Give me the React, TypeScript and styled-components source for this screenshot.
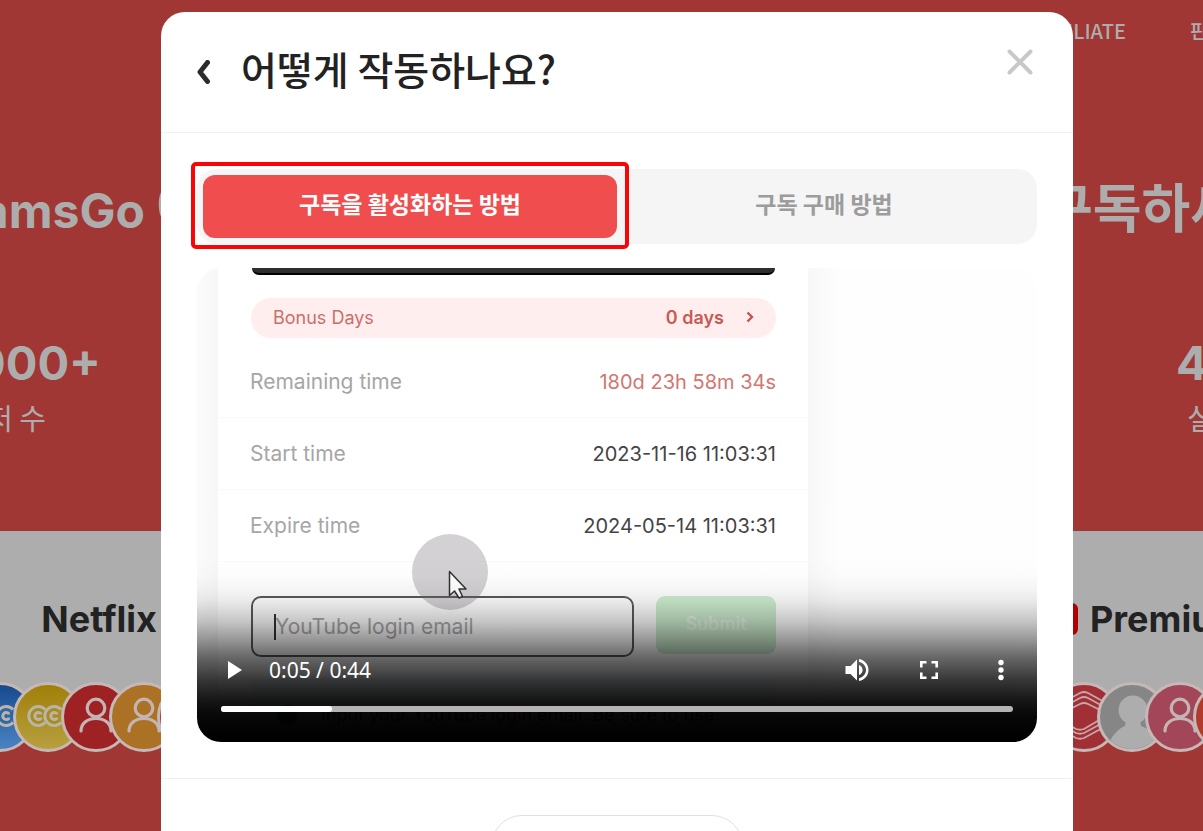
import React, { useState } from "react";
import styled, { createGlobalStyle } from "styled-components";

const GlobalStyle = createGlobalStyle`
  *, *::before, *::after { box-sizing: border-box; }
  html, body { margin: 0; padding: 0; overflow: hidden; background: #a03734; }
  body, button, input {
    font-family: Inter, "Noto Sans CJK KR", sans-serif;
  }
  button { border: 0; padding: 0; margin: 0; background: none; cursor: pointer; }
`;

const Root = styled.div`
  position: relative;
  min-height: 100vh;
  overflow: hidden;
`;

/* ---------- page behind the dialog ---------- */

const Backdrop = styled.div`
  display: flex;
  flex-direction: column;
  color: #adadad;
  white-space: nowrap;
`;

const Hero = styled.section`
  display: flex;
  flex-direction: column;
  padding-bottom: 87px;
`;

const SplitRow = styled.div<{ $height: number; $top?: number }>`
  display: grid;
  grid-template-columns: 227fr 786fr 190fr;
  align-items: center;
  height: ${(p) => p.$height}px;
  margin-top: ${(p) => p.$top ?? 0}px;
`;

const LeftCell = styled.div<{ $pad?: number }>`
  display: flex;
  justify-content: flex-end;
  align-items: center;
  min-width: 0;
  padding-right: ${(p) => p.$pad ?? 0}px;
`;

const RightCell = styled.div<{ $pad?: number; $gap?: number }>`
  grid-column: 3;
  display: flex;
  align-items: center;
  min-width: 0;
  gap: ${(p) => p.$gap ?? 0}px;
  padding-left: ${(p) => p.$pad ?? 0}px;
`;

const NavLink = styled.a`
  color: inherit;
  text-decoration: none;
  font-family: "Noto Sans CJK KR", sans-serif;
  font-size: 20px;
  font-weight: 500;
`;

const HeroTitle = styled.h1`
  margin: 0;
  font-size: 48px;
  font-weight: 700;
  line-height: 70px;
  span { font-family: "Noto Sans CJK KR", sans-serif; font-size: 53px; }
`;

const StatNumber = styled.strong`
  font-size: 47px;
  font-weight: 700;
`;

const StatLabel = styled.span`
  font-family: "Noto Sans CJK KR", sans-serif;
  font-size: 29px;
`;

const Catalog = styled.section`
  display: flex;
  flex-direction: column;
  padding-top: 60px;
  background: #adadad;
`;

const Brand = styled.h2`
  margin: 0;
  color: #222;
  font-size: 36px;
  font-weight: 700;
`;

const AvatarStrip = styled(SplitRow)`
  margin-bottom: -34px;
`;

const Avatar = styled.span<{ $fill: string }>`
  flex: none;
  width: 70px;
  height: 70px;
  margin-right: -22px;
  border: 3px solid #c6b8b7;
  border-radius: 50%;
  background: ${(p) => p.$fill};
  overflow: hidden;
  &:last-child { margin-right: 0; }
  svg { display: block; width: 64px; height: 64px; }
`;

const PersonIcon = () => (
  <svg viewBox="0 0 64 64" fill="none" stroke="#c4b4b3" strokeWidth="3.200" strokeLinecap="round">
    <circle cx="32" cy="23" r="8.800" />
    <path d="M17 46c0-7.500 6-12.500 15-12.500s15 5 15 12.500" />
  </svg>
);

const RingsIcon = ({ ink }: { ink: string }) => {
  const rings = "M27 26.500a6.500 6.500 0 1 0 0 9M26 31h-3M43 26.500a6.500 6.500 0 1 0 0 9M42 31h-3";
  return (
    <svg viewBox="0 0 64 64" fill="none">
      <path d={rings} stroke="#bab5a9" strokeWidth="9" />
      <path d={rings} stroke={ink} strokeWidth="3" />
    </svg>
  );
};

const LayersIcon = () => (
  <svg viewBox="0 0 64 64" fill="none" stroke="#c9a5a6" strokeWidth="1.800" strokeLinejoin="round">
    <path d="M6 20L28 8q4-2 8 0l20 11M6 25L28 13q4-2 8 0l20 11M10 28l18-9q4-2 8 0l18 9" />
    <path d="M10 36l14 8q4 1.500 8 0l22-13M6 38l18 10q4 1.500 8 0l24-13M6 43l18 10q4 1.500 8 0l24-13" />
    <path d="M10 28v8M54 28v3" />
  </svg>
);

const SilhouetteIcon = () => (
  <svg viewBox="0 0 64 64" fill="#adadad">
    <circle cx="33" cy="25" r="14.500" />
    <path d="M26 36h14l1 5c9 3 13 9 16 14 0 6-20 10-26 10S11 61 10 56c3-6 8-12 15-15z" />
  </svg>
);

const TubeMark = styled.span`
  flex: none;
  width: 40px;
  height: 32px;
  border-radius: 6px;
  background: #b00000;
`;

/* ---------- dialog ---------- */

const Overlay = styled.div`
  position: absolute;
  inset: 0;
  display: grid;
  grid-template-columns: 161fr 912fr 130fr;
  align-items: start;
  padding-top: 12px;
`;

const Dialog = styled.div`
  grid-column: 2;
  display: flex;
  flex-direction: column;
  min-width: 0;
  border-radius: 24px;
  background: #fff;
`;

const DialogHeader = styled.header`
  display: flex;
  align-items: center;
  height: 121px;
  padding: 0 36px;
  border-bottom: 1px solid #f0f0f0;
`;

const DialogTitle = styled.h2`
  flex: 1;
  margin: 0;
  padding: 0 0 8px 31px;
  color: #222;
  font-family: "Noto Sans CJK KR", sans-serif;
  font-size: 39px;
  font-weight: 500;
  line-height: 56px;
`;

const IconButton = styled.button`
  display: flex;
  flex: none;
  svg { display: block; }
`;

const CloseButton = styled(IconButton)`
  align-self: flex-start;
  padding-top: 34px;
`;

const DialogBody = styled.div`
  display: flex;
  flex-direction: column;
  gap: 24px;
  padding: 36px;
  border-bottom: 1px solid #f0f0f0;
`;

const Tabs = styled.div`
  display: grid;
  grid-template-columns: 1fr 1fr;
  padding: 6px;
  border-radius: 20px;
  background: #f5f5f5;
`;

const Tab = styled.button<{ $active: boolean; $marked?: boolean }>`
  position: relative;
  height: 63px;
  padding-bottom: 8px;
  border-radius: 12px;
  background: ${(p) => (p.$active ? "#f04e4e" : "transparent")};
  color: ${(p) => (p.$active ? "#fff" : "#9c9c9c")};
  font-family: "Noto Sans CJK KR", sans-serif;
  font-size: 23px;
  font-weight: 700;
  line-height: 32px;
  &::after {
    content: "";
    display: ${(p) => (p.$marked ? "block" : "none")};
    position: absolute;
    inset: -13px -12px -11px;
    border: 4px solid #fa0505;
    border-radius: 5px;
  }
`;

const DialogFooter = styled.footer`
  display: flex;
  justify-content: center;
  padding: 36px;
`;

const PillButton = styled.button`
  width: 252px;
  height: 62px;
  border: 1px solid #e0e0e0;
  border-radius: 31px;
`;

/* ---------- video ---------- */

const Video = styled.div`
  position: relative;
  display: grid;
  grid-template-columns: 21fr 590fr 229fr;
  height: 474px;
  border-radius: 24px;
  overflow: hidden;
  background: #fefefe;
`;

const EdgeShade = styled.div<{ $side: "left" | "right" }>`
  background: linear-gradient(
    to ${(p) => p.$side},
    #f7f7f7,
    #fefefe ${(p) => (p.$side === "left" ? "40px" : "32px")}
  );
`;

const Frame = styled.div`
  display: flex;
  flex-direction: column;
  min-width: 0;
  background: #fff;
`;

const DarkBar = styled.div`
  height: 7px;
  margin: 0 33px 23px 34px;
  border-bottom: 2px solid #000;
  border-radius: 0 0 9px 9px;
  background: #2e2e2e;
`;

const BonusPill = styled.div`
  display: flex;
  align-items: center;
  height: 40px;
  margin: 0 32px 8px 33px;
  padding: 0 20px 2px 22px;
  border-radius: 20px;
  background: #ffeeed;
  color: #cb6f6a;
  font-size: 18px;
  span { flex: 1; }
  strong { font-weight: 600; color: #c85a54; }
  svg { margin-left: 20px; }
`;

const InfoList = styled.dl`
  margin: 0;
`;

const InfoRow = styled.div`
  display: flex;
  align-items: center;
  justify-content: space-between;
  height: 72px;
  padding: 0 32px;
  border-bottom: 1px solid #f9f9f9;
  font-size: 20px;
  dt { color: #a6a6a6; font-size: 21px; }
  dd { margin: 0; color: #444; }
  dd.warn { color: #d27671; }
`;

const EmailForm = styled.div`
  display: flex;
  align-items: flex-start;
  gap: 22px;
  padding: 34px 32px 0 33px;
`;

const EmailInput = styled.input`
  flex: 1;
  min-width: 0;
  height: 61px;
  padding: 0 22px;
  border: 2px solid #5a5a5a;
  border-radius: 10px;
  background: transparent;
  font-size: 21px;
  outline: 0;
  &::placeholder { color: #aaa; opacity: 1; }
`;

const SubmitButton = styled.button`
  width: 120px;
  height: 58px;
  padding-bottom: 4px;
  border-radius: 9px;
  background: #cdeecf;
  color: #e4f4e4;
  font-size: 18px;
  font-weight: 600;
`;

const Hint = styled.p`
  display: flex;
  align-items: center;
  gap: 22px;
  height: 63px;
  margin: 22px 32px 0 33px;
  padding: 8px 24px 0;
  background: #eef6fa;
  color: #333;
  font-size: 18px;
  white-space: nowrap;
  svg { flex: none; }
`;

const Caret = styled.span`
  position: absolute;
  left: 77px;
  top: 346px;
  width: 2px;
  height: 26px;
  background: #333;
`;

const Pointer = styled.div`
  position: absolute;
  left: 215px;
  top: 266px;
  width: 76px;
  height: 76px;
  border-radius: 50%;
  background: rgba(110, 102, 110, 0.3);
  svg { display: block; margin: 36px 0 0 36px; }
`;

const Controls = styled.div`
  position: absolute;
  inset: 290px 0 0;
  display: flex;
  flex-direction: column;
  justify-content: flex-end;
  padding: 0 24px 30px;
  background: linear-gradient(
    to bottom,
    rgba(0, 0, 0, 0) 0%,
    rgba(0, 0, 0, 0.01) 10%,
    rgba(0, 0, 0, 0.04) 17%,
    rgba(0, 0, 0, 0.08) 23%,
    rgba(0, 0, 0, 0.14) 28%,
    rgba(0, 0, 0, 0.22) 34%,
    rgba(0, 0, 0, 0.31) 39%,
    rgba(0, 0, 0, 0.42) 45%,
    rgba(0, 0, 0, 0.52) 50%,
    rgba(0, 0, 0, 0.61) 55%,
    rgba(0, 0, 0, 0.7) 61%,
    rgba(0, 0, 0, 0.78) 66%,
    rgba(0, 0, 0, 0.85) 72%,
    rgba(0, 0, 0, 0.91) 77%,
    rgba(0, 0, 0, 0.97) 85%,
    #000 98%
  );
`;

const ControlRow = styled.div`
  display: flex;
  align-items: center;
  height: 48px;
  gap: 48px;
`;

const Time = styled.span`
  flex: 1;
  margin-left: -24px;
  color: #fff;
  font-family: "Noto Sans", sans-serif;
  font-size: 21px;
`;

const Seek = styled.input`
  appearance: none;
  width: 100%;
  height: 6px;
  margin: 12px 0 0;
  border-radius: 3px;
  overflow: hidden;
  background: #b4b2b4;
  &::-webkit-slider-thumb {
    appearance: none;
    width: 6px;
    height: 6px;
    border-radius: 0 3px 3px 0;
    background: #fff;
    box-shadow: -1000px 0 0 997px #fff;
  }
`;

const leftAvatars = [
  { fill: "linear-gradient(#174a8c, #4a83c4)", icon: <RingsIcon ink="#2f68a8" /> },
  { fill: "linear-gradient(#a08008, #b8a040)", icon: <RingsIcon ink="#a98c1c" /> },
  { fill: "#9e2224", icon: <PersonIcon /> },
  { fill: "#ab7124", icon: <PersonIcon /> },
  { fill: "#a8383c", icon: <PersonIcon /> },
];

const rightAvatars = [
  { fill: "#a03036", icon: <LayersIcon /> },
  { fill: "#868686", icon: <SilhouetteIcon /> },
  { fill: "#a4465a", icon: <PersonIcon /> },
  { fill: "#b03a2c", icon: <PersonIcon /> },
];

const rows = [
  { label: "Remaining time", value: "180d 23h 58m 34s", warn: true },
  { label: "Start time", value: "2023-11-16 11:03:31" },
  { label: "Expire time", value: "2024-05-14 11:03:31" },
];

const DURATION = 44;

export default function App() {
  const [tab, setTab] = useState(0);
  const [position, setPosition] = useState(5.9);

  return (
    <Root>
      <GlobalStyle />
      <Backdrop>
        <Hero>
          <SplitRow as="nav" $height={60}>
            <RightCell $pad={19} $gap={64}>
              <NavLink href="#affiliate">AFFILIATE</NavLink>
              <NavLink href="#sell">판</NavLink>
            </RightCell>
          </SplitRow>
          <SplitRow $height={70} $top={110}>
            <LeftCell $pad={22}>
              <HeroTitle>GamsGo <span>에</span></HeroTitle>
            </LeftCell>
            <RightCell $pad={31}>
              <HeroTitle><span>구독하세</span></HeroTitle>
            </RightCell>
          </SplitRow>
          <SplitRow $height={56} $top={94}>
            <LeftCell $pad={126}><StatNumber>000+</StatNumber></LeftCell>
            <RightCell $pad={163}><StatNumber>4</StatNumber></RightCell>
          </SplitRow>
          <SplitRow $height={54}>
            <LeftCell $pad={181}><StatLabel>저 수</StatLabel></LeftCell>
            <RightCell $pad={174}><StatLabel>실</StatLabel></RightCell>
          </SplitRow>
        </Hero>
        <Catalog>
          <SplitRow $height={56}>
            <LeftCell $pad={70}><Brand>Netflix</Brand></LeftCell>
            <RightCell $pad={25} $gap={12}>
              <TubeMark />
              <Brand>Premium</Brand>
            </RightCell>
          </SplitRow>
          <AvatarStrip $height={70} $top={35}>
            <LeftCell>
              {leftAvatars.map((a, i) => <Avatar key={i} $fill={a.fill}>{a.icon}</Avatar>)}
            </LeftCell>
            <RightCell $pad={36}>
              {rightAvatars.map((a, i) => <Avatar key={i} $fill={a.fill}>{a.icon}</Avatar>)}
            </RightCell>
          </AvatarStrip>
        </Catalog>
      </Backdrop>

      <Overlay>
        <Dialog role="dialog" aria-labelledby="dialog-title">
          <DialogHeader>
            <IconButton aria-label="뒤로">
              <svg width="13" height="24" viewBox="0 0 13 24" fill="none" stroke="#2c2c2c" strokeWidth="5" strokeLinecap="round" strokeLinejoin="round">
                <path d="M10.500 2.500L3 12l7.500 9.500" />
              </svg>
            </IconButton>
            <DialogTitle id="dialog-title">어떻게 작동하나요?</DialogTitle>
            <CloseButton aria-label="닫기">
              <svg width="34" height="32" viewBox="0 0 34 32" stroke="#c8c8c8" strokeWidth="4" strokeLinecap="round">
                <path d="M6.500 5.500l21 21M27.500 5.500l-21 21" />
              </svg>
            </CloseButton>
          </DialogHeader>

          <DialogBody>
            <Tabs role="tablist">
              <Tab role="tab" aria-selected={tab === 0} $active={tab === 0} $marked onClick={() => setTab(0)}>
                구독을 활성화하는 방법
              </Tab>
              <Tab role="tab" aria-selected={tab === 1} $active={tab === 1} onClick={() => setTab(1)}>
                구독 구매 방법
              </Tab>
            </Tabs>

            <Video>
              <EdgeShade $side="left" />
              <Frame>
                <DarkBar />
                <BonusPill>
                  <span>Bonus Days</span>
                  <strong>0 days</strong>
                  <svg width="12" height="14" viewBox="0 0 12 14" fill="none" stroke="#c4534d" strokeWidth="2.400">
                    <path d="M3.500 2.500L8 7l-4.500 4.500" />
                  </svg>
                </BonusPill>
                <InfoList>
                  {rows.map((r) => (
                    <InfoRow key={r.label}>
                      <dt>{r.label}</dt>
                      <dd className={r.warn ? "warn" : undefined}>{r.value}</dd>
                    </InfoRow>
                  ))}
                </InfoList>
                <EmailForm>
                  <EmailInput type="email" aria-label="YouTube login email" placeholder="YouTube login email" />
                  <SubmitButton>Submit</SubmitButton>
                </EmailForm>
                <Hint>
                  <svg width="24" height="24" viewBox="0 0 24 24" fill="#2a5a9a">
                    <circle cx="12" cy="12" r="10" />
                  </svg>
                  Input your YouTube login email. Be sure to use
                </Hint>
              </Frame>
              <EdgeShade $side="right" />
              <Caret />
              <Pointer>
                <svg width="20" height="30" viewBox="0 0 20 30" fill="#fff" stroke="#333" strokeWidth="1.500" strokeLinejoin="round">
                  <path d="M1.500 1.500v24l5-4.500 4.500 7 3.500-1.500-3.500-7.500h7z" />
                </svg>
              </Pointer>
              <Controls>
                <ControlRow>
                  <IconButton aria-label="재생">
                    <svg width="24" height="24" viewBox="0 0 24 24" fill="#fff">
                      <path d="M7 3v18l14-9z" />
                    </svg>
                  </IconButton>
                  <Time>0:05 / 0:44</Time>
                  <IconButton aria-label="음소거">
                    <svg width="24" height="24" viewBox="0 0 24 24" fill="#fff">
                      <path d="M0.500 8v8h5l6.500 6.500v-21L5.500 8zM14 7v10c2.300-.8 3.600-2.800 3.600-5S16.300 7.800 14 7z" />
                      <path d="M14 1v2.800c4 1 7 4.300 7 8.200s-3 7.200-7 8.200V23c5.500-1 9.500-5.500 9.500-11S19.500 2 14 1z" />
                    </svg>
                  </IconButton>
                  <IconButton aria-label="전체 화면">
                    <svg width="24" height="24" viewBox="0 0 24 24" fill="none" stroke="#fff" strokeWidth="2.600">
                      <path d="M4.300 9.500V4.300h5.200M14.500 4.300h5.200v5.200M19.700 14.500v5.200h-5.200M9.500 19.700H4.300v-5.200" />
                    </svg>
                  </IconButton>
                  <IconButton aria-label="더보기">
                    <svg width="24" height="24" viewBox="0 0 24 24" fill="#fff">
                      <circle cx="12" cy="4.500" r="2.700" />
                      <circle cx="12" cy="12" r="2.700" />
                      <circle cx="12" cy="19.500" r="2.700" />
                    </svg>
                  </IconButton>
                </ControlRow>
                <Seek
                  type="range"
                  aria-label="재생 위치"
                  min={0}
                  max={DURATION}
                  step={0.1}
                  value={position}
                  onChange={(e) => setPosition(Number(e.target.value))}
                />
              </Controls>
            </Video>
          </DialogBody>

          <DialogFooter>
            <PillButton aria-label="확인" />
          </DialogFooter>
        </Dialog>
      </Overlay>
    </Root>
  );
}
